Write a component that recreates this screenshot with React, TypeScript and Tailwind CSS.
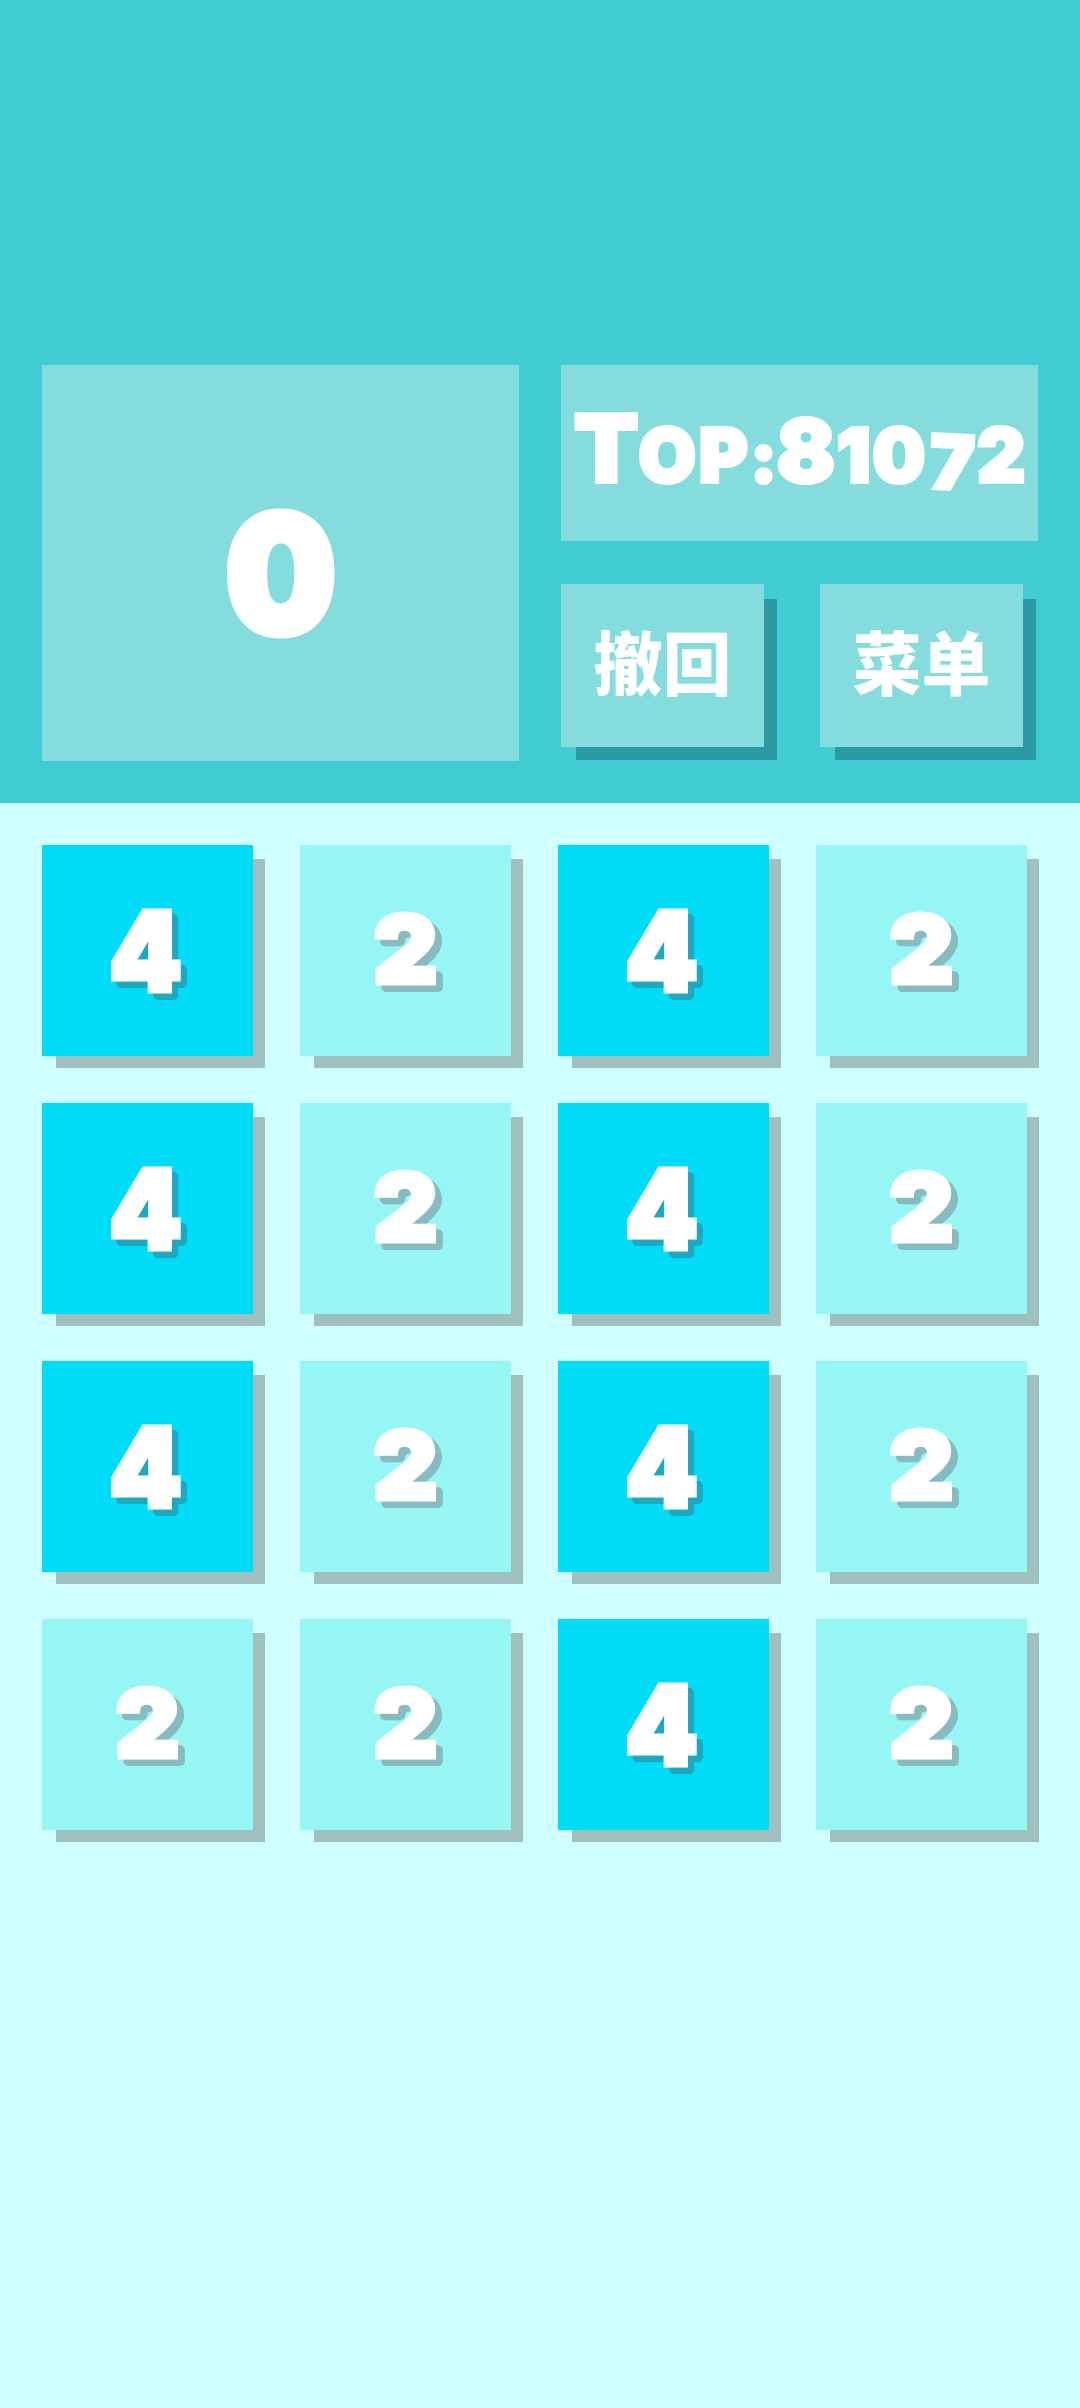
const rows = [
  [4, 2, 4, 2],
  [4, 2, 4, 2],
  [4, 2, 4, 2],
  [2, 2, 4, 2],
];

const heavy = "font-['Inter','Noto_Sans_CJK_SC',sans-serif] font-black text-white";

const Tile = ({ value }: { value: number }) => {
  if (value === 4) {
    return (
      <div className="flex h-[211px] items-center justify-center bg-[#00dcf8] shadow-[13px_13px_0_-1px_#a0c0c0]">
        <span className={`${heavy} -ml-1 inline-block scale-x-[0.94] text-[110px] leading-none [-webkit-text-stroke:5px_white] [text-shadow:9px_6px_0_#1ea8c0,3px_6px_0_#1ea8c0,6px_9px_0_#1ea8c0,6px_3px_0_#1ea8c0,8px_8px_0_#1ea8c0,4px_8px_0_#1ea8c0,8px_4px_0_#1ea8c0,6px_6px_0_#1ea8c0]`}>
          4
        </span>
      </div>
    );
  }
  return (
    <div className="flex h-[211px] items-center justify-center bg-[#96f6f4] shadow-[13px_13px_0_-1px_#a0c0c0]">
      <span className={`${heavy} -mt-1 inline-block scale-x-[1.05] text-[94px] leading-none [-webkit-text-stroke:5px_white] [text-shadow:9px_6px_0_#86bcc0,3px_6px_0_#86bcc0,6px_9px_0_#86bcc0,6px_3px_0_#86bcc0,8px_8px_0_#86bcc0,4px_8px_0_#86bcc0,8px_4px_0_#86bcc0,6px_6px_0_#86bcc0]`}>
        2
      </span>
    </div>
  );
};

const ActionButton = ({ label }: { label: string }) => (
  <button className="flex h-[163px] w-[203px] items-center justify-center bg-[#84dcdc] shadow-[14px_14px_0_-1px_#2c9aa2]">
    <span className={`${heavy} text-[69px] leading-none`}>{label}</span>
  </button>
);

export default function App() {
  return (
    <div className="min-h-[2408px] bg-[#d0ffff]">
      <div className="flex h-[803px] gap-[42px] bg-[#3fccd3] pl-[42px] pt-[365px]">
        <div className="flex h-[396px] w-[477px] items-center justify-center bg-[#84dcdc] pt-[20px]">
          <span className={`${heavy} inline-block scale-x-[0.95] text-[162px] leading-none [-webkit-text-stroke:9px_white]`}>0</span>
        </div>
        <div className="flex w-[477px] flex-col gap-[43px]">
          <div className="flex h-[176px] items-center justify-center bg-[#84dcdc] pb-[10px]">
            <div className={`${heavy} flex items-baseline leading-none [-webkit-text-stroke:4px_white]`}>
              <span className="text-[94px]">T</span>
              <span className="text-[74px] tracking-[3px]">OP</span>
              <span className="text-[70px]">:</span>
              <span className="mr-[2px] text-[86px]">8</span>
              <span className="text-[74px] tracking-[2px]">10</span>
              <span className="mx-[3px] inline-block translate-y-[7px] rotate-[3deg] text-[74px]">7</span>
              <span className="text-[74px]">2</span>
            </div>
          </div>
          <div className="flex gap-[56px]">
            <ActionButton label="撤回" />
            <ActionButton label="菜单" />
          </div>
        </div>
      </div>
      <div className="box-content flex w-[985px] flex-col gap-[47px] pl-[42px] pt-[42px]">
        {rows.map((row, i) => (
          <div key={i} className="grid grid-cols-4 gap-[47px]">
            {row.map((value, j) => (
              <Tile key={j} value={value} />
            ))}
          </div>
        ))}
      </div>
    </div>
  );
}
